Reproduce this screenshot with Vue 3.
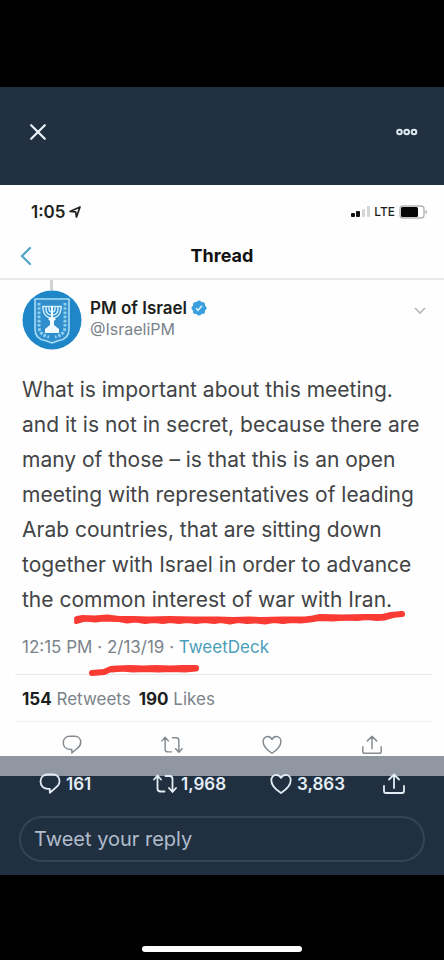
<script setup>
const lines = [
  'What is important about this meeting.',
  'and it is not in secret, because there are',
  'many of those – is that this is an open',
  'meeting with representatives of leading',
  'Arab countries, that are sitting down',
  'together with Israel in order to advance',
  'the common interest of war with Iran.'
]

const icons = {
  reply: 'M9.5 2.5H15C19 2.5 21.5 5.2 21.5 9C21.5 11.9 20.2 13.9 17.8 15.6L11.8 20.7V16.8H10C5.6 16.8 2.5 13.8 2.5 9.6C2.5 5.3 5.5 2.5 9.5 2.5Z',
  retweet: 'M1 7.5L4.5 3.5L8 7.5M4.5 4V16.5Q4.5 19.5 7.5 19.5H11.5M12.5 4H16.5Q19.5 4 19.5 7V19.5M16 16L19.5 20L23 16',
  like: 'M12 21C8.5 18.8 2.3 14 2.3 8.3C2.3 5 4.5 2.8 7.2 2.8C9.3 2.8 11.1 4 12 6C12.9 4 14.7 2.8 16.8 2.8C19.5 2.8 21.7 5 21.7 8.3C21.7 14 15.5 18.8 12 21Z',
  share: 'M2 14V19Q2 21 4 21H20Q22 21 22 19V14M12 16V2.5M7 7.5L12 2.5L17 7.5'
}

const tweetActions = [
  { id: 'reply', label: 'Reply' },
  { id: 'retweet', label: 'Retweet' },
  { id: 'like', label: 'Like' },
  { id: 'share', label: 'Share' }
]

const viewerActions = [
  { id: 'reply', label: 'Reply', count: '161' },
  { id: 'retweet', label: 'Retweet', count: '1,968' },
  { id: 'like', label: 'Like', count: '3,863' },
  { id: 'share', label: 'Share', count: '' }
]
</script>

<template>
  <main class="viewer">
    <header class="viewer-bar">
      <button class="icon-btn" type="button" aria-label="Close">
        <svg width="16" height="16" viewBox="0 0 16 16"><path d="M1.2 1.2L14.8 14.8M14.8 1.2L1.2 14.8" fill="none" stroke="#eaf2f8" stroke-width="2.2" stroke-linecap="round" /></svg>
      </button>
      <button class="icon-btn" type="button" aria-label="More">
        <svg width="22" height="8" viewBox="0 0 22 8"><g fill="none" stroke="#dce7ee" stroke-width="2"><circle cx="3.500" cy="4" r="2.3" /><circle cx="10.700" cy="4" r="2.3" /><circle cx="18" cy="4" r="2.3" /></g></svg>
      </button>
    </header>

    <section class="photo">
      <div class="status">
        <span class="clock">1:05</span>
        <svg width="12" height="12" viewBox="0 0 12 12"><path d="M1 5.500L11 1L7.500 11L6.600 5.800Z" fill="none" stroke="#222" stroke-width="1.7" stroke-linejoin="round" /></svg>
        <svg class="signal" width="20" height="12" viewBox="0 0 20 12">
          <rect x="0" y="7" width="4" height="4" rx="1" fill="#111" /><rect x="5" y="5" width="4" height="6" rx="1" fill="#111" />
          <rect x="11" y="3" width="3" height="8" rx="1" fill="#d5d5d5" /><rect x="16" y="0" width="3" height="11" rx="1" fill="#d5d5d5" />
        </svg>
        <span class="lte">LTE</span>
        <svg width="29" height="14" viewBox="0 0 29 14">
          <rect x="1" y="1" width="24" height="12" rx="3" fill="#fff" stroke="#b5b5b5" stroke-width="1.4" />
          <rect x="2" y="2" width="17" height="10" rx="1.5" fill="#050505" /><path d="M26.5 5V9Q28 8.500 28 7Q28 5.500 26.500 5Z" fill="#aaa" />
        </svg>
      </div>

      <div class="nav">
        <button class="icon-btn" type="button" aria-label="Back">
          <svg width="12" height="20" viewBox="0 0 12 20"><path d="M10 2L2 10L10 18" fill="none" stroke="#4fa3c9" stroke-width="2.2" stroke-linecap="round" /></svg>
        </button>
        <h1>Thread</h1>
      </div>

      <article>
        <div class="thread-line"></div>
        <div class="author">
          <svg class="avatar" width="60" height="60" viewBox="0 0 60 60" role="img" aria-label="Emblem of Israel">
            <circle cx="30" cy="30" r="29.500" fill="#1f86c8" />
            <path d="M13 9H47V39Q47 49 37 50.500L30 53L23 50.500Q13 49 13 39Z" fill="#2f8ecb" stroke="#a9dcf5" stroke-width="1.6" />
            <g fill="none" stroke="#8fd0f0" stroke-width="3" stroke-dasharray="2.600 1.600"><path d="M17 13V38Q18 45 27 47" /><path d="M43 13V38Q42 45 33 47" /></g>
            <g fill="none" stroke="#c9ecfb" stroke-width="1.5"><path d="M21 17V19Q22 28 30 28Q38 28 39 19V17" /><path d="M24 17V19Q24 25 30 25Q36 25 36 19V17" /><path d="M27 17V19Q27 22 30 22Q33 22 33 19V17" /><path d="M20 16.500H40" /></g>
            <path d="M29 16H31V27L34 29L32 31V35L37 39V43H23V39L28 35V31L26 29L29 27Z" fill="#f1fafe" />
          </svg>
          <div class="names">
            <div class="name">
              PM of Israel
              <svg width="16" height="16" viewBox="0 0 16 16" role="img" aria-label="Verified"><g fill="#3a9fdc"><circle cx="8" cy="8" r="6" /><circle cx="8" cy="3" r="2.500" /><circle cx="8" cy="13" r="2.500" /><circle cx="3" cy="8" r="2.500" /><circle cx="13" cy="8" r="2.500" /><circle cx="4.500" cy="4.500" r="2.500" /><circle cx="11.500" cy="4.500" r="2.500" /><circle cx="4.500" cy="11.500" r="2.500" /><circle cx="11.500" cy="11.500" r="2.500" /></g><path d="M5 8.300L7 10.300L11 5.800" fill="none" stroke="#d8f0fc" stroke-width="1.5" /></svg>
            </div>
            <div class="handle">@IsraeliPM</div>
          </div>
          <button class="icon-btn more" type="button" aria-label="Tweet options">
            <svg width="12" height="8" viewBox="0 0 12 8"><path d="M1 1L6 6L11 1" fill="none" stroke="#b4b8ba" stroke-width="1.600" /></svg>
          </button>
        </div>

        <div class="marked">
          <p class="text"><span v-for="line in lines" :key="line">{{ line }}</span></p>
          <svg class="mark mark-text" width="334" height="18" viewBox="0 0 334 18">
            <path d="M4 9L10 8L22 8.500L34 7.500L46 9L60 9L76 9.500L96 9L120 9.500L145 9.500L160 10L176 9.500L188 10L210 9.500L232 9.500L240 8.500L247 7L270 7.500L292 7L310 7L318 5L329 4" fill="none" stroke="#f93b34" stroke-width="6" stroke-linecap="round" stroke-linejoin="round" />
            <path d="M3 12L12 9.500L22 10.500L31 9.500L46 10L54 11.500L63 10.500L72 12L81 11L90 12L97 11L106 12L114 11L123 12L132 11L141 12L148 11L157 12.500L165 11L174 12L183 11.500L192 12.500L201 11L210 12L219 11L228 11.500L237 10.500L246 9L260 9.500L273 8.500L284 9L294 8L304 9L311 8.500L320 6" fill="none" stroke="#f93b34" stroke-width="4" stroke-linecap="round" stroke-linejoin="bevel" />
          </svg>
        </div>

        <div class="marked meta">
          12:15 PM · 2/13/19 · <a href="#">TweetDeck</a>
          <svg class="mark mark-date" width="114" height="16" viewBox="0 0 114 16">
            <path d="M4 11L10 10.500L16 10L23 7L30 6.500L42 6L55 6.500L68 6L82 6.500L95 6L108 6" fill="none" stroke="#f93b34" stroke-width="6" stroke-linecap="round" stroke-linejoin="round" />
            <path d="M24 8L34 7L45 8L58 7.500L70 8L84 7.500L97 8L108 7" fill="none" stroke="#f93b34" stroke-width="5" stroke-linecap="round" stroke-linejoin="bevel" />
          </svg>
        </div>

        <div class="stats"><span><b>154</b> Retweets</span><span><b>190</b> Likes</span></div>

        <div class="actions">
          <button v-for="a in tweetActions" :key="a.id" class="icon-btn" type="button" :aria-label="a.label">
            <svg width="22" height="22" viewBox="0 0 24 24"><path :d="icons[a.id]" fill="none" stroke="#838b91" stroke-width="1.600" stroke-linecap="round" stroke-linejoin="round" /></svg>
          </button>
        </div>
      </article>
      <div class="band"></div>
    </section>

    <footer class="panel">
      <div class="counts">
        <button v-for="a in viewerActions" :key="a.id" class="icon-btn count" type="button" :aria-label="a.label">
          <svg width="24" height="24" viewBox="0 0 24 24"><path :d="icons[a.id]" fill="none" stroke="#e4edf5" stroke-width="1.800" stroke-linecap="round" stroke-linejoin="round" /></svg>
          <span v-if="a.count">{{ a.count }}</span>
        </button>
      </div>
      <input class="reply-box" type="text" placeholder="Tweet your reply" aria-label="Tweet your reply" />
    </footer>

    <div class="home"></div>
  </main>
</template>

<style>
body {
  background: #000;
}
</style>

<style scoped>
* {
  box-sizing: border-box;
}
.viewer {
  display: flex;
  flex-direction: column;
  min-height: 100vh;
  padding-top: 87px;
  background: #000;
  font-family: Inter, "Liberation Sans", sans-serif;
  font-size: 17px;
  line-height: 20px;
}
.icon-btn {
  display: flex;
  align-items: center;
  padding: 0;
  border: 0;
  background: none;
  color: inherit;
  font: inherit;
}
svg {
  display: block;
  flex: none;
}
.viewer-bar {
  display: flex;
  justify-content: space-between;
  align-items: center;
  height: 98px;
  padding: 0 26px 8px 30px;
  background: #213040;
}
.photo {
  background: #fefefe;
  color: #1c1e20;
}
.status {
  display: flex;
  align-items: center;
  gap: 3px;
  height: 48px;
  padding: 6px 16px 0 31px;
}
.clock {
  font-weight: 600;
}
.signal {
  margin-left: auto;
}
.lte {
  font-size: 12px;
  font-weight: 500;
  margin-right: 1px;
}
.nav {
  display: grid;
  grid-template-columns: 32px 1fr 32px;
  align-items: center;
  height: 47px;
  padding: 0 20px;
  border-bottom: 2px solid #e9eaeb;
}
.nav h1 {
  margin: 0;
  font-size: 18px;
  font-weight: 700;
  text-align: center;
  color: #111;
}
.thread-line {
  width: 3px;
  height: 10px;
  margin-left: 50px;
  background: #cfd3d6;
}
.author {
  display: flex;
  gap: 8px;
  padding: 0 18px 0 22px;
}
.names {
  padding-top: 8px;
}
.name {
  display: flex;
  align-items: center;
  gap: 4px;
  font-weight: 600;
}
.handle {
  font-size: 16px;
  line-height: 22px;
  color: #7b838a;
}
.more {
  align-self: flex-start;
  margin-left: auto;
  padding-top: 17px;
}
.marked {
  position: relative;
}
.text {
  margin: 0;
  padding: 22px 22px 0;
  font-size: 21px;
  font-weight: 400;
  line-height: 35px;
  color: #424446;
}
.text span {
  display: block;
  white-space: nowrap;
}
.mark {
  position: absolute;
}
.mark-text {
  left: 73px;
  bottom: -11px;
}
.mark-date {
  left: 73px;
  top: 45px;
}
.meta {
  margin: 0 12px 0 15px;
  padding: 20px 7px 17px;
  border-bottom: 1px solid #e6e8ea;
  color: #7b838a;
}
.meta a {
  color: #4a9fba;
  text-decoration: none;
}
.stats {
  display: flex;
  gap: 8px;
  margin: 0 12px 0 15px;
  padding: 14px 7px 12px;
  border-bottom: 1px solid #f1f2f3;
  color: #7b838a;
}
.stats b {
  color: #1c1e20;
  font-weight: 700;
}
.actions {
  display: grid;
  grid-template-columns: repeat(4, 1fr);
  justify-items: center;
  align-items: center;
  height: 34px;
  padding: 12px 22px 0;
}
.band {
  height: 20px;
  background: #9097a1;
}
.panel {
  height: 99px;
  padding: 0 19px;
  background: #213040;
  color: #e4edf5;
}
.counts {
  display: grid;
  grid-template-columns: 115px 116px 1fr 24px;
  grid-template-rows: 16px;
  align-items: center;
  padding-left: 19px;
  margin-right: 19px;
}
.count {
  gap: 4px;
  font-weight: 600;
}
.reply-box {
  display: block;
  width: 100%;
  height: 46px;
  margin-top: 24px;
  padding: 0 13px;
  border: 2px solid #354554;
  border-radius: 23px;
  background: transparent;
  color: #e4edf5;
  font-family: inherit;
  font-size: 20px;
}
.reply-box::placeholder {
  color: #b0bccb;
  opacity: 1;
}
.home {
  width: 36%;
  height: 6px;
  margin: auto auto 8px;
  border-radius: 3px;
  background: #fff;
}
</style>
